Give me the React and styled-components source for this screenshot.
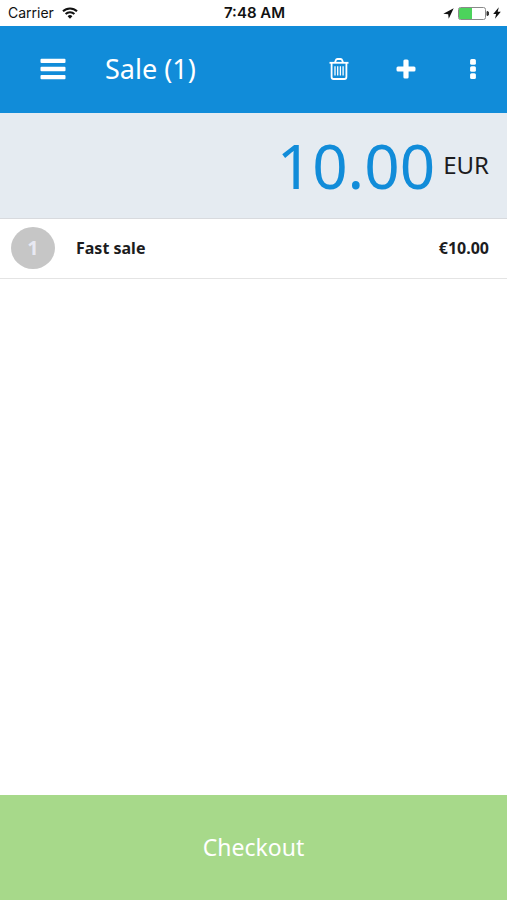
import React, { useState } from 'react'
import styled, { createGlobalStyle } from 'styled-components'

const initialItems = [
    { id: 1, quantity: 1, title: 'Fast sale', price: 10 }
]

function StatusBar() {
    return (
        <StatusBarStyled>
            <div className="carrier">
                <span>Carrier</span>
                <svg width="16" height="12" viewBox="0 0 16 12" fill="none" stroke="#111" strokeWidth="2">
                    <path d="M1 4.3a10 10 0 0 1 14 0" />
                    <path d="M3.6 7a6.3 6.3 0 0 1 8.8 0" />
                    <path d="M5.6 9.2a3.5 3.5 0 0 1 4.8 0L8 11.8z" fill="#111" stroke="none" />
                </svg>
            </div>
            <time>7:48 AM</time>
            <div className="battery">
                <svg width="11" height="11" viewBox="0 0 11 11" fill="#111">
                    <path d="M10.7 0.3L0.3 5.8l4.9 0.4 0.5 4.6z" />
                </svg>
                <svg width="31" height="13" viewBox="0 0 31 13">
                    <rect x="0.5" y="0.5" width="27" height="12" rx="2" fill="#fff" stroke="#8a8a8a" />
                    <path d="M2 1h12v11H2a1 1 0 0 1-1-1V2a1 1 0 0 1 1-1z" fill="#4cd35c" />
                    <path d="M29 4.5a2 2 0 0 1 0 4z" fill="#333" stroke="#333" />
                </svg>
                <svg width="8" height="12" viewBox="0 0 8 12" fill="#111">
                    <path d="M5.8 0.3L0.2 7h2.9L2 11.7l5.8-7H4.7z" />
                </svg>
            </div>
        </StatusBarStyled>
    )
}

function App() {
    const [items, setItems] = useState(initialItems)

    const total = items.reduce((sum, item) => sum + item.price * item.quantity, 0)
    const count = items.reduce((sum, item) => sum + item.quantity, 0)

    const addItem = () => {
        setItems([...items, { id: Date.now(), quantity: 1, title: 'Fast sale', price: 10 }])
    }

    return (
        <>
            <GlobalStyle />
            <AppStyled>
                <StatusBar />
                <HeaderStyled>
                    <IconButton aria-label="Menu">
                        <svg width="26" height="22" viewBox="0 0 26 22" fill="#fff">
                            <rect x="0.5" y="0.7" width="25" height="4.4" rx="1" />
                            <rect x="0.5" y="8.8" width="25" height="4.4" rx="1" />
                            <rect x="0.5" y="16.9" width="25" height="4.4" rx="1" />
                        </svg>
                    </IconButton>
                    <h1>Sale ({count})</h1>
                    <IconButton aria-label="Delete sale" onClick={() => setItems([])}>
                        <svg width="20" height="22" viewBox="0 0 20 22" fill="none" stroke="#fff" strokeWidth="1.8">
                            <path d="M0.5 4.8h19" />
                            <path d="M6 4.6L6.8 2.2q0.4-1.2 1.6-1.2h3.2q1.2 0 1.6 1.2l0.8 2.4" />
                            <path d="M2.6 5v14q0 2 2 2h10.8q2 0 2-2V5" />
                            <path d="M6 8.2v9.4M8.7 8.2v9.4M11.4 8.2v9.4M14.1 8.2v9.4" strokeWidth="1.3" />
                        </svg>
                    </IconButton>
                    <IconButton aria-label="Add item" onClick={addItem}>
                        <svg width="20" height="20" viewBox="0 0 20 20" fill="#fff">
                            <rect x="7.4" y="0.5" width="5.2" height="19" rx="1.5" />
                            <rect x="0.5" y="7.4" width="19" height="5.2" rx="1.5" />
                        </svg>
                    </IconButton>
                    <IconButton aria-label="More options">
                        <svg width="6" height="20" viewBox="0 0 6 20" fill="#fff">
                            <rect x="0.1" y="0.1" width="5.8" height="5.6" rx="1.5" />
                            <rect x="0.1" y="7.2" width="5.8" height="5.6" rx="1.5" />
                            <rect x="0.1" y="14.3" width="5.8" height="5.6" rx="1.5" />
                        </svg>
                    </IconButton>
                </HeaderStyled>
                <TotalStyled>
                    <strong>{total.toFixed(2)}</strong>
                    <span>EUR</span>
                </TotalStyled>
                <ItemList>
                    {items.map((item) => {
                        const {id, quantity, title, price} = item
                        return <li key={id}>
                            <Quantity>{quantity}</Quantity>
                            <span className="title">{title}</span>
                            <span>€{price.toFixed(2)}</span>
                        </li>
                    })}
                </ItemList>
                <CheckoutButton>Checkout</CheckoutButton>
            </AppStyled>
        </>
    )
}

const GlobalStyle = createGlobalStyle`
    *{
        margin: 0;
        padding: 0;
        box-sizing: border-box;
    }
    body{
        background: #fff;
        color: #1c1c1e;
        font-family: 'Noto Sans', 'Open Sans', sans-serif;
    }
    button{
        border: none;
        font-family: inherit;
        cursor: pointer;
    }
    svg{
        display: block;
    }
`;

const AppStyled = styled.div`
    display: flex;
    flex-direction: column;
    min-height: 100vh;
`;

const StatusBarStyled = styled.div`
    display: grid;
    grid-template-columns: 1fr auto 1fr;
    align-items: center;
    height: 26px;
    padding: 0 6px 0 8px;
    color: #111;
    font-family: Inter, 'Liberation Sans', sans-serif;
    font-size: 14px;
    line-height: 18px;
    time{
        font-size: 15px;
        font-weight: 600;
    }
    .carrier, .battery{
        display: flex;
        align-items: center;
        gap: 8px;
    }
    .battery{
        justify-content: flex-end;
        gap: 4px;
    }
`;

const HeaderStyled = styled.header`
    display: flex;
    align-items: center;
    height: 87px;
    padding: 0 1px 2px 19px;
    background: #118cd9;
    color: #fff;
    h1{
        flex: 1;
        padding-left: 19px;
        font-size: 27px;
        line-height: 36px;
        font-weight: 400;
    }
`;

const IconButton = styled.button`
    display: flex;
    align-items: center;
    justify-content: center;
    width: 67px;
    height: 67px;
    background: transparent;
`;

const TotalStyled = styled.div`
    display: flex;
    align-items: center;
    justify-content: flex-end;
    gap: 8px;
    height: 106px;
    padding: 0 18px 2px;
    background: #e5ebf1;
    border-bottom: 1px solid #d8dade;
    strong{
        color: #118cd9;
        font-size: 62px;
        line-height: 84px;
        font-weight: 400;
    }
    span{
        font-size: 24px;
        line-height: 32px;
    }
`;

const ItemList = styled.ul`
    flex: 1;
    list-style: none;
    li{
        display: flex;
        align-items: center;
        height: 60px;
        padding: 0 18px 1px 11px;
        border-bottom: 1px solid #e4e4e4;
        font-size: 16px;
        line-height: 22px;
        font-weight: 700;
    }
    .title{
        flex: 1;
        padding-left: 21px;
    }
`;

const Quantity = styled.span`
    display: flex;
    align-items: center;
    justify-content: center;
    width: 44px;
    height: 42px;
    border-radius: 50%;
    background: #c6c6c6;
    color: #e8e9f3;
    font-size: 20px;
`;

const CheckoutButton = styled.button`
    height: 105px;
    padding-bottom: 2px;
    background: #a7d98a;
    color: #fff;
    font-size: 23px;
    line-height: 32px;
`;

export default App
